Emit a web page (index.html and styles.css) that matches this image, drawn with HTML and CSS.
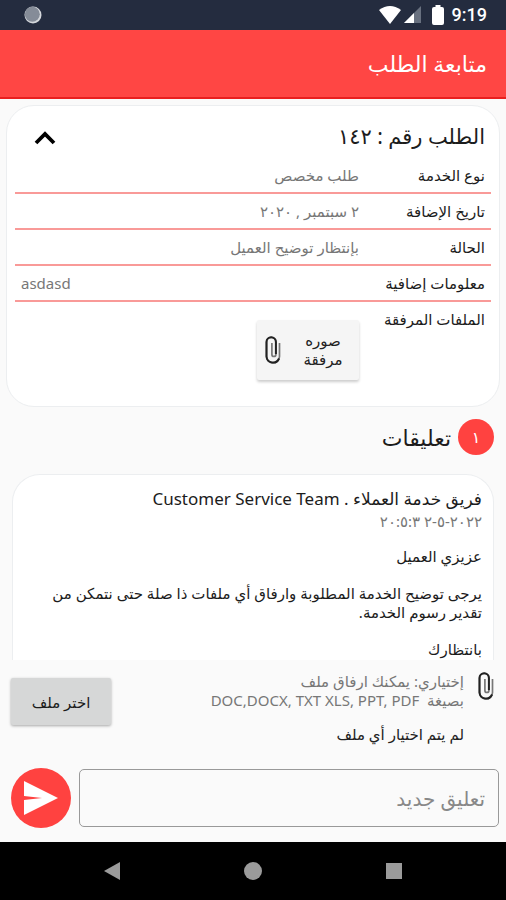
FILE: index.html
```html
<!DOCTYPE html>
<html lang="ar" dir="rtl">
<head>
<meta charset="utf-8">
<meta name="viewport" content="width=device-width, initial-scale=1">
<title>متابعة الطلب</title>
<link rel="stylesheet" href="styles.css">
</head>
<body>
<svg class="defs" aria-hidden="true">
  <symbol id="clip" viewBox="0 0 16 28">
    <path d="M14.500 7V20.500a6.500 6.500 0 0 1-13 0V6a4.700 4.700 0 0 1 9.400 0V18.500a2 2 0 0 1-4 0V7" fill="none" stroke="#777" stroke-width="1.700"/>
    <path d="M14 22.500A6.500 6.500 0 0 1 1.500 20.500V6a4.700 4.700 0 0 1 9.400 0V18" fill="none" stroke="currentColor" stroke-width="2"/>
  </symbol>
</svg>
<div class="status" dir="ltr">
  <svg class="status-dot" viewBox="0 0 18 18"><circle cx="9" cy="9" r="8.500" fill="#d5d8dc"/><circle cx="8.300" cy="8.300" r="7.500" fill="#858c98"/></svg>
  <div class="status-icons">
    <svg width="22" height="18" viewBox="0 0 22 18"><path d="M0 4Q11-4 22 4L11 18Z" fill="#fff"/></svg>
    <svg width="17" height="18" viewBox="0 0 17 18"><path d="M17 0V17H0Z" fill="#68707f"/><path d="M10 7V17H0Z" fill="#fff"/></svg>
    <svg class="battery" width="12" height="20" viewBox="0 0 12 20"><path d="M3.500 0h5v2H10a2 2 0 0 1 2 2v14a2 2 0 0 1-2 2H2a2 2 0 0 1-2-2V4a2 2 0 0 1 2-2h1.500Z" fill="#fff"/></svg>
    <span>9:19</span>
  </div>
</div>
<header class="appbar"><h1>متابعة الطلب</h1></header>
<main>
  <section class="card order">
    <div class="order-head">
      <h2>الطلب رقم : ١٤٢</h2>
      <button class="toggle" aria-label="طي"><svg width="22" height="14" viewBox="0 0 22 14"><path d="M2 12 11 3l9 9" fill="none" stroke="#000" stroke-width="3.800"/></svg></button>
    </div>
    <dl>
      <div class="row"><dt>نوع الخدمة</dt><dd>طلب مخصص</dd></div>
      <div class="row"><dt>تاريخ الإضافة</dt><dd>٢ سبتمبر , ٢٠٢٠</dd></div>
      <div class="row"><dt>الحالة</dt><dd>بإنتظار توضيح العميل</dd></div>
      <div class="row"><dt>معلومات إضافية</dt><dd dir="ltr">asdasd</dd></div>
      <div class="row files"><dt>الملفات المرفقة</dt><dd><button class="file"><span>صوره مرفقة</span><svg class="clip"><use href="#clip"/></svg></button></dd></div>
    </dl>
  </section>
  <h2 class="comments-title"><span class="badge">١</span>تعليقات</h2>
  <article class="card comment">
    <h3>فريق خدمة العملاء . Customer Service Team</h3>
    <p class="date"><bdo dir="ltr">٢٠:٥:٣ ٢-٥-٢٠٢٢</bdo></p>
    <p>عزيزي العميل</p>
    <p>يرجى توضيح الخدمة المطلوبة وارفاق أي ملفات ذا صلة حتى نتمكن من تقدير رسوم الخدمة.</p>
    <p>بانتظارك</p>
  </article>
</main>
<form class="composer">
  <div class="attach">
    <svg class="clip"><use href="#clip"/></svg>
    <div class="attach-text">
      <p>إختياري: يمكنك ارفاق ملف<br>بصيغة&nbsp; DOC,DOCX, TXT XLS, PPT, PDF</p>
      <p class="none">لم يتم اختيار أي ملف</p>
    </div>
    <button type="button" class="choose">اختر ملف</button>
  </div>
  <div class="write">
    <input type="text" placeholder="تعليق جديد" aria-label="تعليق جديد">
    <button type="button" class="send" aria-label="إرسال"><svg width="36" height="34" viewBox="0 0 36 34"><path d="M1 0 35 17 1 34V19L19 17 1 15Z" fill="#fff"/></svg></button>
  </div>
</form>
<nav class="navbar" dir="ltr">
  <button aria-label="رجوع"><svg width="16" height="18" viewBox="0 0 16 18"><path d="M16 0v18L0 9Z" fill="#9b9b9b"/></svg></button>
  <button aria-label="الرئيسية"><svg width="18" height="18" viewBox="0 0 18 18"><circle cx="9" cy="9" r="9" fill="#9b9b9b"/></svg></button>
  <button aria-label="التطبيقات"><svg width="16" height="16" viewBox="0 0 16 16"><rect width="16" height="16" fill="#9b9b9b"/></svg></button>
</nav>
</body>
</html>
```
FILE: styles.css
```css
* { box-sizing: border-box; margin: 0; padding: 0; }
body {
  display: flex; flex-direction: column; height: 100vh;
  background: #fafafa; color: #1c1c1c;
  font: 15px/20px "Noto Sans", "DejaVu Sans", sans-serif;
}
button { border: 0; background: none; color: inherit; font: inherit; }
svg { display: block; flex: none; }
.defs { position: absolute; width: 0; height: 0; }

.status {
  display: flex; flex: none; align-items: center; justify-content: space-between;
  height: 30px; padding: 0 19px 0 24px; background: #242c3f; color: #fff;
}
.status-dot { width: 18px; height: 18px; }
.status-icons { display: flex; align-items: center; gap: 3px; font: 500 18px/32px Roboto, sans-serif; }
.battery { margin: 0 5px 0 8px; }

.appbar {
  flex: none; height: 69px; padding: 19px;
  background: #ff4644; border-bottom: 2px solid #e91f1f; color: #fff;
}
.appbar h1 { font-size: 22px; line-height: 28px; font-weight: 400; }

main { display: flex; flex: 1; flex-direction: column; min-height: 0; padding: 6px 6px 0; }
.card { background: #fff; border: 1px solid #eceef0; border-radius: 28px; }
.order { flex: none; padding: 12px 8px 26px; }
.order-head { display: flex; align-items: center; justify-content: space-between; padding: 0 6px 0 19px; height: 40px; }
.order-head h2 { padding-bottom: 4px; font-size: 21px; line-height: 36px; font-weight: 400; }
.toggle svg { width: 22px; height: 14px; }
.row { display: flex; height: 36px; padding: 7px 6px; border-bottom: 2px solid #f99a98; }
.row dt { flex: none; width: 126px; font-weight: 500; white-space: nowrap; }
.row dd { flex: 1; color: #777; }
.files { height: auto; padding-bottom: 0; border: 0; }
.file {
  display: flex; align-items: center; justify-content: space-between;
  width: 102px; height: 60px; margin-top: 11px; padding: 0 8px;
  background: #f5f5f5; color: #222; border-radius: 2px; box-shadow: 0 2px 3px #0003; line-height: 19px;
}
.file span { width: 56px; }
.clip { width: 16px; height: 28px; color: #222; }

.comments-title { display: flex; flex: none; align-items: center; gap: 7px; height: 60px; padding: 0 6px; font-size: 22px; font-weight: 400; }
.badge { width: 36px; height: 36px; border-radius: 50%; background: #ff4240; color: #fff; font-size: 16px; line-height: 36px; text-align: center; }
.comment { flex: 1; min-height: 0; margin: 7px 6px 0; padding: 12px 11px 0; border-bottom: 0; border-radius: 28px 28px 0 0; overflow: hidden; }
.comment h3 { font-size: 17px; line-height: 24px; font-weight: 400; }
.comment p { margin-bottom: 18px; line-height: 19px; }
.comment .date { margin-bottom: 16px; line-height: 20px; color: #777; }

.composer { flex: none; padding: 12px 7px 14px 11px; }
.attach { display: flex; gap: 14px; padding: 0 5px 0 0; }
.attach-text { flex: 1; color: #777; line-height: 19px; white-space: nowrap; }
.attach-text .none { margin-top: 15px; color: #222; }
.choose { flex: none; width: 100px; height: 47px; margin-top: 6px; background: #d6d7d7; border-radius: 2px; box-shadow: 0 1px 3px #0005; }
.write { display: flex; align-items: center; gap: 8px; margin-top: 24px; }
.write input { flex: 1; min-width: 0; height: 58px; padding: 0 13px; border: 1px solid #999; border-radius: 5px; background: transparent; font: inherit; font-size: 20px; }
.write input::placeholder { color: #888; opacity: 1; }
.send { display: flex; align-items: center; justify-content: center; width: 60px; height: 60px; border-radius: 50%; background: #ff4240; }

.navbar { display: flex; flex: none; align-items: center; justify-content: center; gap: 124px; height: 58px; background: #000; }
.navbar svg { margin: auto; }
```
